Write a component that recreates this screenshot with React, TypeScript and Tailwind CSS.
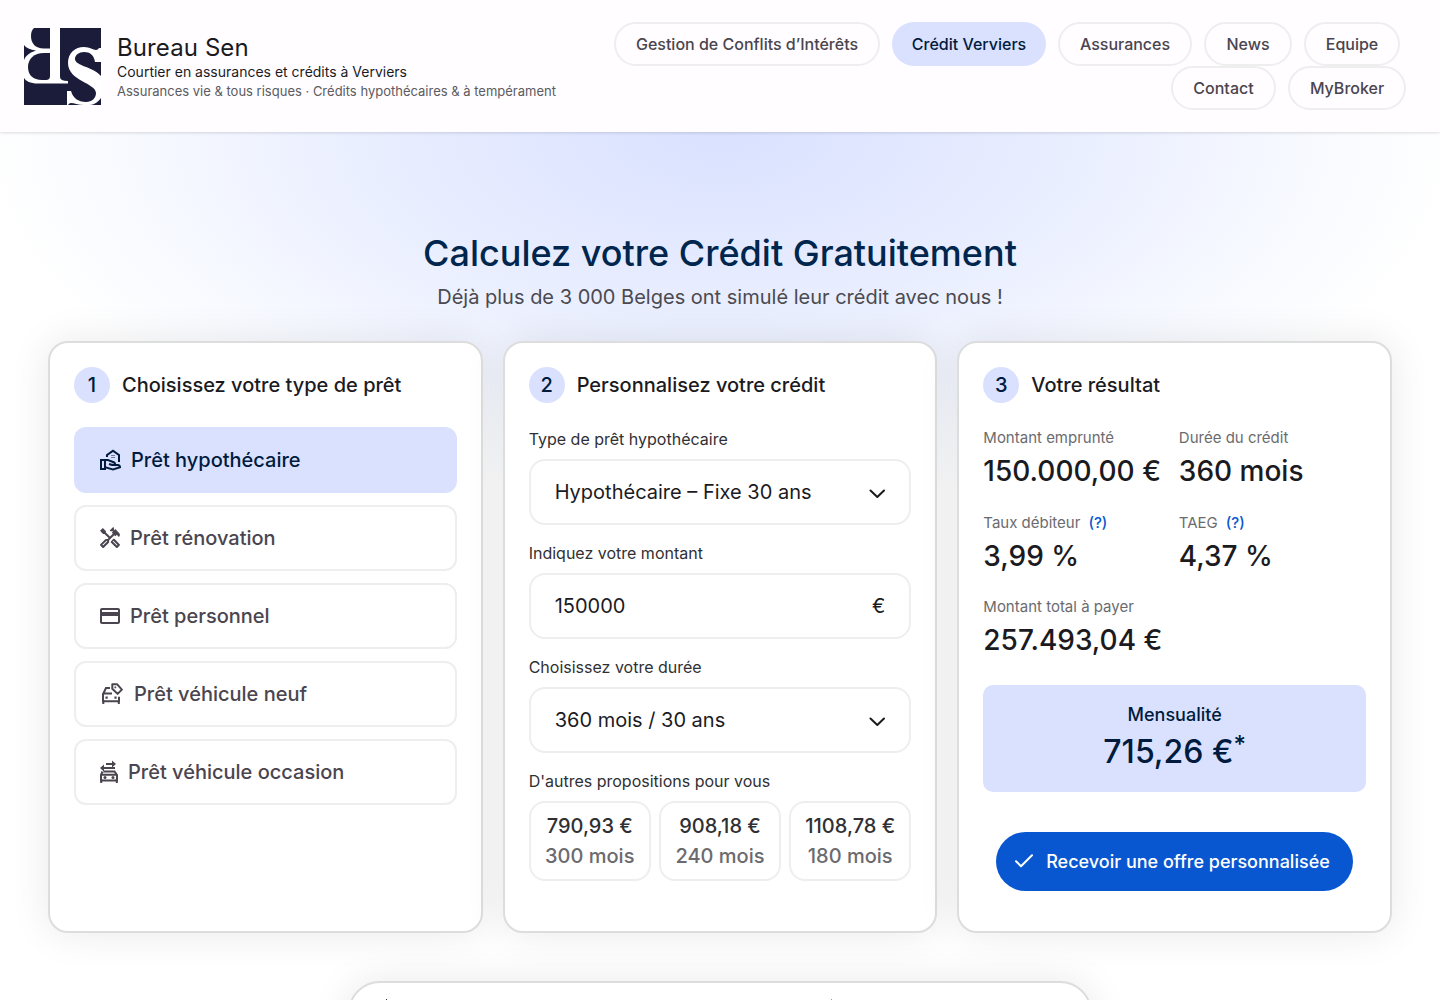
import { useState } from "react";
import type { ReactNode } from "react";
import { MdOutlineCreditCard, MdOutlineHandyman, MdOutlineRealEstateAgent } from "react-icons/md";

interface NavItem {
  label: string;
  width: string;
  active?: boolean;
}

interface LoanType {
  id: string;
  label: string;
  icon: ReactNode;
}

const NAV_ROWS: NavItem[][] = [
  [
    { label: "Gestion de Conflits d’Intérêts", width: "w-[266px]" },
    { label: "Crédit Verviers", width: "w-[154px]", active: true },
    { label: "Assurances", width: "w-[134px]" },
    { label: "News", width: "w-[88px]" },
    { label: "Equipe", width: "w-[96px]" },
  ],
  [
    { label: "Contact", width: "w-[105px]" },
    { label: "MyBroker", width: "w-[118px]" },
  ],
];

const LOAN_TYPES: LoanType[] = [
  { id: "hypothecaire", label: "Prêt hypothécaire", icon: <MdOutlineRealEstateAgent size={24} className="ml-px" /> },
  { id: "renovation", label: "Prêt rénovation", icon: <MdOutlineHandyman size={24} /> },
  { id: "personnel", label: "Prêt personnel", icon: <MdOutlineCreditCard size={24} /> },
  { id: "neuf", label: "Prêt véhicule neuf", icon: <CarTagIcon /> },
  { id: "occasion", label: "Prêt véhicule occasion", icon: <CarSwapIcon /> },
];

const OFFERS = [
  { price: "790,93 €", duration: "300 mois" },
  { price: "908,18 €", duration: "240 mois" },
  { price: "1108,78 €", duration: "180 mois" },
];

function Logo() {
  return (
    <svg width="77" height="77" viewBox="0 0 77 77" className="shrink-0">
      <rect width="77" height="77" fill="#1b1c3a" />
      <path
        d="M0 0H36V49Q36 53 44 53V55.500H14C6 55.500 2 53 0 50V32C2 27 7 24 12 22.500C6 21.500 2 20 0 17Z"
        fill="#fff"
      />
      <path d="M26 0V20.500H20C11 20.500 7 15 7 8C7 4 8 2 10 0Z" fill="#1b1c3a" />
      <path d="M26 25H20C10 25 4 31 4 39C4 47 9 52 18 52H22Q26 52 26 48Z" fill="#1b1c3a" />
      <path
        d="M77 20V34H71C70 27 66 24 60 24C55 24 51 27 51 31C51 38 70 39 77 48V70C74 74 70 77 66 77H60C54 77 50 75 47 75Q45 75 44 77H43V63H47C49 70 54 74 62 74C68 74 72 70 72 65C72 55 44 53 44 35C44 25 51 19 60 19C66 19 69 22 72 22Q74 22 75 20Z"
        fill="#fff"
      />
    </svg>
  );
}

function CarTagIcon() {
  return (
    <svg width="28" height="24" viewBox="0 0 28 24" fill="none" stroke="currentColor" strokeWidth="2">
      <path d="M12 6H8L5.100 12M5 11.600h9M5 11.500v7.800h16v-4.500M5.300 18v4M20.800 18v4" />
      <path d="M14.300 2.200h4.700l4.900 5.400-4.300 4.300-5.300-5.200z" strokeLinejoin="round" />
      <path d="M16.500 4.500h1.700v1.700h-1.700zM7.500 14.500h2.200v2.200H7.500zM16.400 14.500h2.200v2.200h-2.200z" fill="currentColor" stroke="none" />
    </svg>
  );
}

function CarSwapIcon() {
  return (
    <svg width="22" height="24" viewBox="0 0 22 24" fill="none" stroke="currentColor" strokeWidth="2">
      <path d="M8 4h7M6 8h11M5.500 11.500h11L19 15v5.500H3V15l1.500-3.500M3 14.800h16M3.200 19v4M18.800 19v4" />
      <path d="M14 .5l4 3.500-4 3.500zM6 4.500L2 8l4 3.500z" fill="currentColor" stroke="none" />
      <circle cx="7" cy="17.600" r="1.500" fill="currentColor" stroke="none" />
      <circle cx="15" cy="17.600" r="1.500" fill="currentColor" stroke="none" />
    </svg>
  );
}

function Header() {
  return (
    <header className="relative z-10 flex h-[132px] items-start justify-between bg-[#fffdff] shadow-[0_1px_3px_rgba(0,0,0,0.14)]">
      <div className="flex gap-4 pt-7 pl-6">
        <Logo />
        <div className="pt-[5px] whitespace-nowrap">
          <div className="text-[24px] leading-[29px] tracking-[0.1px] text-[#1b1b1f]">Bureau Sen</div>
          <div className="text-[14px] leading-5 text-[#1b1b1f]">
            Courtier en assurances et crédits à Verviers
          </div>
          <div className="text-[13px] leading-[19px] text-[#5b5b60]">
            Assurances vie &amp; tous risques · Crédits hypothécaires &amp; à tempérament
          </div>
        </div>
      </div>
      <nav className="flex flex-col items-end pt-[22px]">
        {NAV_ROWS.map((row, i) => (
          <div key={i} className={`flex gap-3 ${i === 0 ? "mr-10" : "mr-[34px]"}`}>
            {row.map((item) => (
              <a
                key={item.label}
                className={`flex h-11 items-center justify-center rounded-full text-[16px] font-medium whitespace-nowrap ${item.width} ${
                  item.active ? "bg-[#dae1ff] text-[#001b3d]" : "border-2 border-[#eeeeee] text-[#4a454e]"
                }`}
              >
                {item.label}
              </a>
            ))}
          </div>
        ))}
      </nav>
    </header>
  );
}

function StepCard({ step, title, children }: { step: number; title: string; children: ReactNode }) {
  return (
    <section className="h-[592px] rounded-[20px] border-2 border-[#dddddd] bg-white px-6 pt-6 shadow-[0_0_40px_rgba(0,0,0,0.09)]">
      <div className="flex h-9 items-center gap-3">
        <span className="flex size-9 items-center justify-center rounded-full bg-[#dae1ff] text-[20px] font-medium text-[#001b3d]">
          {step}
        </span>
        <h2 className="text-[20px] font-medium text-[#1b1b1f]">{title}</h2>
      </div>
      {children}
    </section>
  );
}

function Field({ label, value, suffix }: { label: string; value: string; suffix: ReactNode }) {
  return (
    <div className="mb-4">
      <div className="mb-2 text-[16px] leading-6 text-[#303034]">{label}</div>
      <div className="flex h-[66px] items-center justify-between rounded-2xl border-2 border-[#eeeeee] px-6 text-[20px] text-[#1b1b1f]">
        <span>{value}</span>
        {suffix}
      </div>
    </div>
  );
}

function Chevron() {
  return (
    <svg width="16" height="10" viewBox="0 0 16 10" fill="none" className="mt-1" stroke="#1b1b1f" strokeWidth="2">
      <path d="M1.500 1.500l6.800 6.500 6.700-6.500" strokeLinecap="round" strokeLinejoin="round" />
    </svg>
  );
}

function Result({ label, value, help }: { label: string; value: string; help?: boolean }) {
  return (
    <div className="h-[84.5px] whitespace-nowrap">
      <div className="text-[15px] leading-[22px] text-[#6b6b6f]">
        {label}
        {help && <span className="ml-2 font-medium text-[#0957d0]">(?)</span>}
      </div>
      <div className="mt-[2px] text-[28px] leading-10 font-medium text-[#1b1b1f]">{value}</div>
    </div>
  );
}

export default function App() {
  const [selected, setSelected] = useState("hypothecaire");

  return (
    <div className="h-[1000px] w-[1440px] overflow-hidden bg-white font-['Inter',sans-serif]">
      <Header />
      <main className="h-[868px] bg-[radial-gradient(735px_375px_at_50%_0,#dae1ff,#e8edff_45%,#f5f8ff_75%,#ffffff)]">
        <div className="pt-[93px] text-center">
          <h1 className="text-[36px] leading-[56px] font-medium text-[#00264d]">
            Calculez votre Crédit Gratuitement
          </h1>
          <p className="text-[20px] leading-8 text-[#4a4a50]">
            Déjà plus de 3 000 Belges ont simulé leur crédit avec nous !
          </p>
        </div>

        <div className="mt-7 grid grid-cols-3 gap-5 px-12">
          <StepCard step={1} title="Choisissez votre type de prêt">
            <div className="mt-6 flex flex-col gap-3">
              {LOAN_TYPES.map((loan) => (
                <button
                  key={loan.id}
                  onClick={() => setSelected(loan.id)}
                  className={`flex h-[66px] items-center gap-2 rounded-xl border-2 pl-[22px] text-[20px] font-medium ${
                    loan.id === selected
                      ? "border-[#dae1ff] bg-[#dae1ff] text-[#001b3d]"
                      : "border-[#eeeeee] text-[#4a454e]"
                  }`}
                >
                  {loan.icon}
                  {loan.label}
                </button>
              ))}
            </div>
          </StepCard>

          <StepCard step={2} title="Personnalisez votre crédit">
            <div className="mt-6">
              <Field label="Type de prêt hypothécaire" value="Hypothécaire – Fixe 30 ans" suffix={<Chevron />} />
              <Field label="Indiquez votre montant" value="150000" suffix={<span>€</span>} />
              <Field label="Choisissez votre durée" value="360 mois / 30 ans" suffix={<Chevron />} />
              <div className="mb-2 text-[16px] leading-6 text-[#303034]">D'autres propositions pour vous</div>
              <div className="grid grid-cols-3 gap-2">
                {OFFERS.map((offer) => (
                  <div
                    key={offer.duration}
                    className="h-20 rounded-2xl border-2 border-[#eeeeee] pt-2 text-center text-[20px] leading-[30px] font-medium whitespace-nowrap"
                  >
                    <div className="text-[#303034]">{offer.price}</div>
                    <div className="text-[#6b6b6f]">{offer.duration}</div>
                  </div>
                ))}
              </div>
            </div>
          </StepCard>

          <StepCard step={3} title="Votre résultat">
            <div className="mt-6 grid grid-cols-[195.5px_1fr]">
              <Result label="Montant emprunté" value="150.000,00 €" />
              <Result label="Durée du crédit" value="360 mois" />
              <Result label="Taux débiteur" value="3,99 %" help />
              <Result label="TAEG" value="4,37 %" help />
              <Result label="Montant total à payer" value="257.493,04 €" />
            </div>
            <div className="mt-1 h-[107px] rounded-[10px] bg-[#dae1ff] pt-4 text-center font-medium text-[#001b3d]">
              <div className="text-[18px] leading-7">Mensualité</div>
              <div className="text-[32px] leading-[46px]">
                715,26 €<sup className="top-[-10px] text-[24px]">*</sup>
              </div>
            </div>
            <button className="mx-auto mt-10 flex h-[59px] w-[357px] items-center rounded-full bg-[#0957d0] pl-[18px] text-[18px] font-medium whitespace-nowrap text-white">
              <svg width="19" height="14" viewBox="0 0 19 14" fill="none" stroke="currentColor" strokeWidth="2">
                <path d="M2 7.200l5 5L18 1.200" strokeLinecap="round" strokeLinejoin="round" />
              </svg>
              <span className="ml-[13px]">Recevoir une offre personnalisée</span>
            </button>
          </StepCard>
        </div>

        <section className="mx-auto mt-12 h-[120px] w-[744px] rounded-[32px] border-2 border-[#dddddd] bg-white shadow-[0_0_40px_rgba(0,0,0,0.09)]">
          <div className="flex pt-4 pl-9">
            <span className="h-2 w-px bg-[#303034]" />
            <span className="ml-[444px] h-2 w-px bg-[#99999c]" />
          </div>
        </section>
      </main>
    </div>
  );
}
